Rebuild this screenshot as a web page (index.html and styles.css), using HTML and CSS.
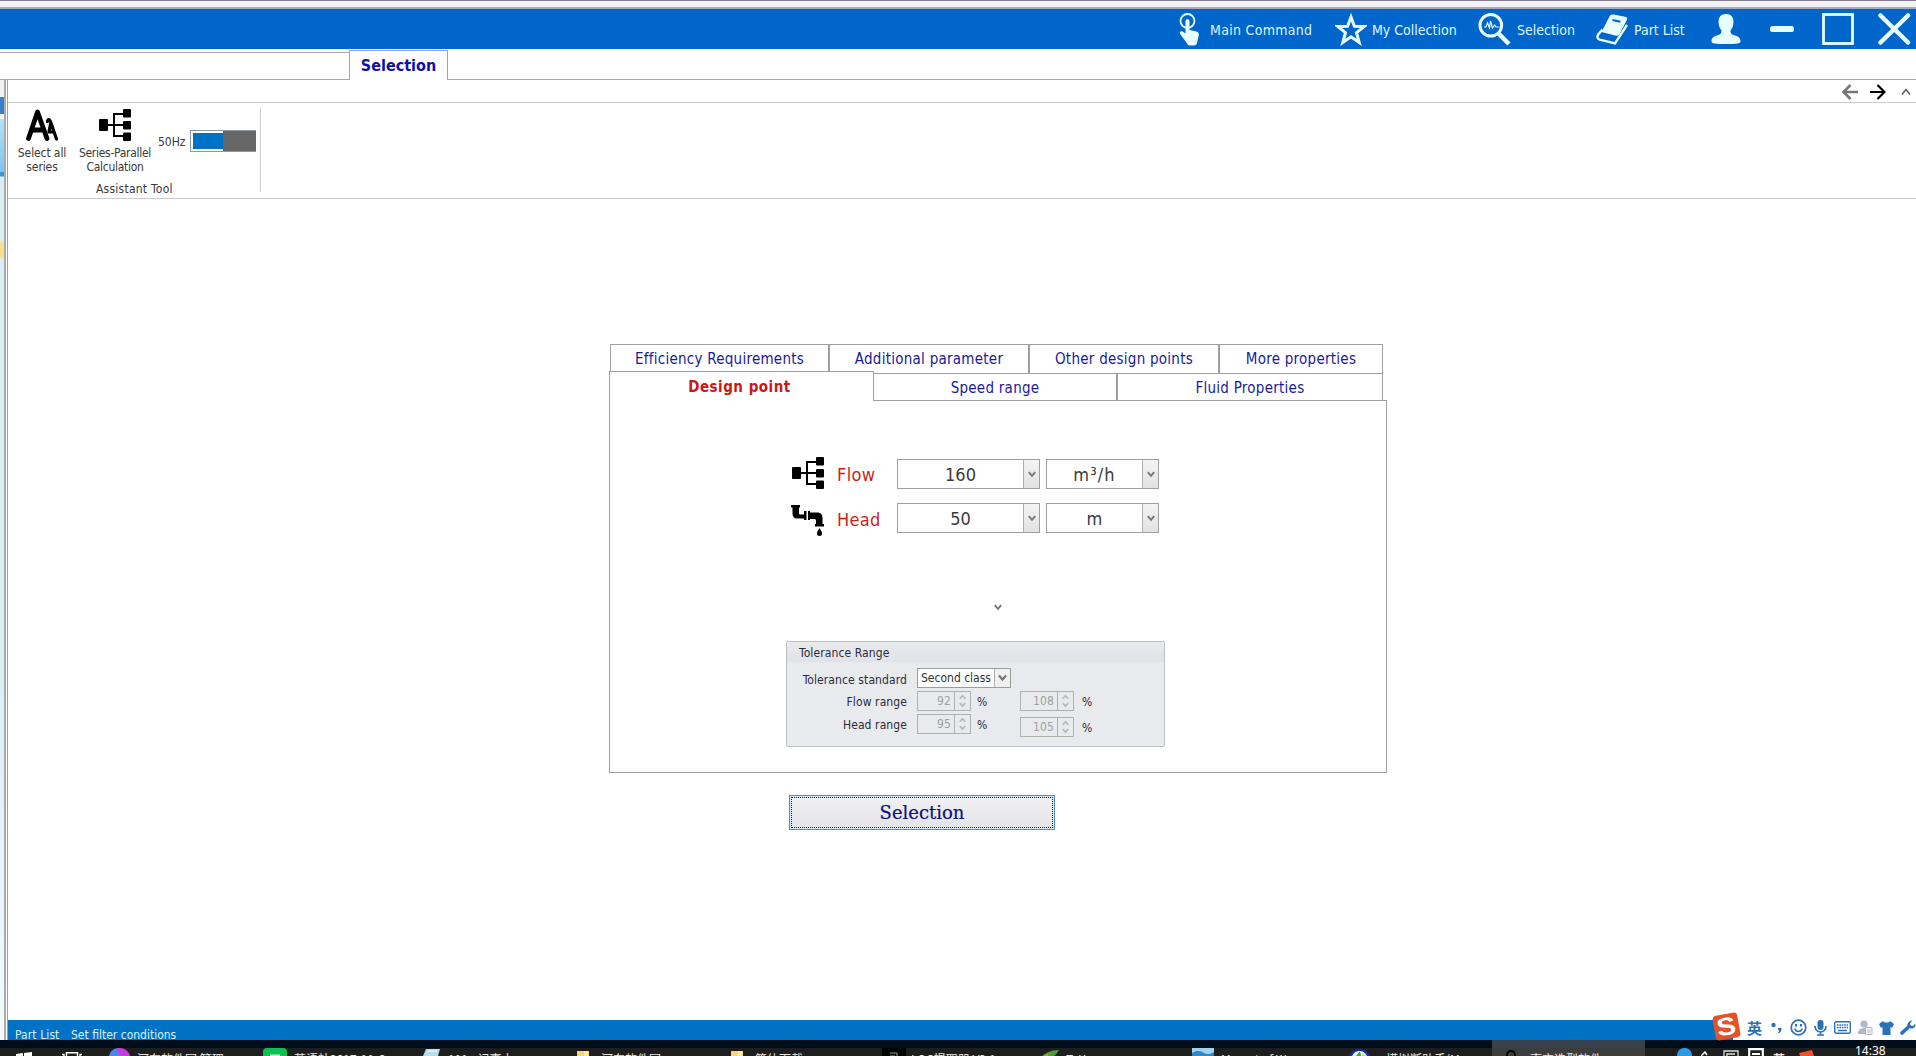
FILE: index.html
```html
<!DOCTYPE html>
<html lang="en">
<head>
<meta charset="utf-8">
<title>Selection</title>
<link rel="stylesheet" href="styles.css">
</head>
<body>
<svg class="defs" width="0" height="0">
  <symbol id="tree" viewBox="0 0 32 32"><path d="M8 16h18M15 4v24M14 5h11M14 27h11" fill="none" stroke="#000" stroke-width="2"/><rect x="0" y="10" width="9" height="12" rx="1"/><rect x="24" y="0" width="8" height="8.500" rx="1"/><rect x="24" y="12" width="8" height="8.500" rx="1"/><rect x="24" y="23.500" width="8" height="8.500" rx="1"/></symbol>
  <symbol id="down" viewBox="0 0 8 7"><path d="M.8 1.200L4 4.800l3.200-3.600" fill="none" stroke="currentColor" stroke-width="2"/></symbol>
  <symbol id="up" viewBox="0 0 8 7"><path d="M.8 5.500L4 2l3.200 3.500" fill="none" stroke="currentColor" stroke-width="2"/></symbol>
  <symbol id="folder" viewBox="0 0 12 5"><path d="M0 0h12v5H0z" fill="#f5d67a"/><path d="M7 0h4v5H7z" fill="#fbe8a8"/></symbol>
</svg>

<div class="edge"></div>
<header class="titlebar">
  <svg width="20" height="33" viewBox="0 0 20 33"><circle cx="8.500" cy="8" r="7" fill="none" stroke="#e8ffff" stroke-width="1.800"/><path d="M6.500 8c0-2.500 4-2.500 4 0v9l7 1.500c2 .5 2.500 1.500 2.300 3.500L18 30c-.4 1.500-1.500 2.500-3 2.500h-4c-1.500 0-2.500-.8-3-2L.8 20.500C.3 19 2 17.500 3.500 18.500l3 2z" fill="#e8ffff"/></svg>
  <span class="nav nav-main">Main Command</span>
  <svg width="32" height="33" viewBox="0 0 32 33"><path d="M16 4l3.400 9.200 9.800.3-7.700 6.200 2.700 9.800-8.200-5.700-8.200 5.700 2.700-9.800-7.700-6.200 9.800-.3z" fill="none" stroke="#e8ffff" stroke-width="3"/></svg>
  <span class="nav">My Collection</span>
  <svg width="34" height="33" viewBox="0 0 34 33"><circle cx="12.800" cy="12.300" r="10.800" fill="none" stroke="#e8ffff" stroke-width="3"/><path d="M20.500 20.500l10.500 10.500" stroke="#e8ffff" stroke-width="4.500"/><path d="M6 14h2l1.500-4 2 5 1-7 2 7 2-3 1.500 2H21" fill="none" stroke="#e8ffff" stroke-width="1.200"/></svg>
  <span class="nav">Selection</span>
  <svg width="33" height="33" viewBox="0 0 33 33"><path d="M14 2.500q1-1.500 3.500-1L29 3.800q3 .7 2 3L23.500 21q-1 2.200-3.500 1.700L5.500 19z" fill="#e8ffff"/><path d="M16.500 7l8 1.700" stroke="#06c" stroke-width="2"/><path d="M6.500 16.500L2.200 21.500c-1.500 2.500-.5 4.500 1.500 5.200L19 30.300 31 12" fill="none" stroke="#e8ffff" stroke-width="2.400"/><path d="M5 20.500l14 4" stroke="#06c" stroke-width=".8"/></svg>
  <span class="nav">Part List</span>
  <svg width="30" height="33" viewBox="0 0 30 33"><path d="M15 1c5 0 7.500 3 7.500 7.500 0 3.500-1 6.500-3 9 0 3 1 4 4.500 5 4 1.200 5.500 2.500 5.500 6 0 2-4 2.500-14.500 2.500S.5 30.500.5 28.500c0-3.500 1.500-4.800 5.500-6 3.500-1 4.500-2 4.500-5-2-2.500-3-5.500-3-9C7.500 4 10 1 15 1z" fill="#e8ffff"/></svg>
  <svg width="24" height="33" viewBox="0 0 24 33"><rect y="13" width="24" height="6" rx="2.500" fill="#e8ffff"/></svg>
  <svg width="32" height="33" viewBox="0 0 32 33"><rect x="1.500" y="1.500" width="29" height="29" fill="none" stroke="#e8ffff" stroke-width="2.800"/></svg>
  <svg width="33" height="33" viewBox="0 0 33 33"><path d="M2.500 2.500l27.500 27M30 2.500l-27.500 27" stroke="#e8ffff" stroke-width="4.500" stroke-linecap="round"/></svg>
</header>

<div class="tabstrip">
  <div class="strip-left"></div>
  <div class="page-tab">Selection</div>
  <div class="strip-right"></div>
</div>

<div class="body">
  <aside class="behind"></aside>
  <div class="window">
    <div class="arrows">
      <svg width="16" height="16" viewBox="0 0 16 16"><path d="M16 8H2M8.500 1L1.500 8l7 7" fill="none" stroke="#777" stroke-width="2.600"/></svg>
      <svg width="16" height="16" viewBox="0 0 16 16"><path d="M0 8h14M7.500 1l7 7-7 7" fill="none" stroke="#000" stroke-width="2.200"/></svg>
      <svg class="collapse" width="10" height="16" viewBox="0 0 10 16"><path d="M1 10.500l4-5 4 5" fill="none" stroke="#666" stroke-width="1.700"/></svg>
    </div>
    <div class="ribbon">
      <div class="ribbon-group">
        <div class="tools">
          <div class="tool tool-series">
            <svg width="33" height="32" viewBox="0 0 33 32"><path d="M2.500 29.500L11.500 3l9.500 26.500M6.500 21h10" fill="none" stroke="#000" stroke-width="4.800" stroke-linecap="round" stroke-linejoin="round"/><path d="M21.500 12.500c.5-2.500 2-2.500 3 0L30.500 30M24.500 15l-1.500 8h4" fill="none" stroke="#000" stroke-width="3.200" stroke-linecap="round" stroke-linejoin="round"/></svg>
            <span>Select all</span><span>series</span>
          </div>
          <div class="tool tool-parallel">
            <svg width="32" height="32"><use href="#tree"/></svg>
            <span>Series-Parallel</span><span>Calculation</span>
          </div>
          <span class="hz">50Hz</span>
          <div class="switch"></div>
        </div>
        <div class="group-name">Assistant Tool</div>
      </div>
    </div>

    <main class="main">
      <div class="row row-back">
        <div class="tab tab-eff">Efficiency Requirements</div>
        <div class="tab tab-add">Additional parameter</div>
        <div class="tab tab-other">Other design points</div>
        <div class="tab tab-more">More properties</div>
      </div>
      <div class="row row-front">
        <div class="active">Design point</div>
        <div class="tab tab-speed">Speed range</div>
        <div class="tab tab-fluid">Fluid Properties</div>
        <div class="stub"></div>
      </div>
      <div class="panel">
        <div class="field">
          <svg width="32" height="32"><use href="#tree"/></svg>
          <span class="label">Flow</span>
          <div class="combo quantity"><span>160</span><i><svg width="8" height="7"><use href="#down"/></svg></i></div>
          <div class="combo unit"><span class="cubic">m³/h</span><i><svg width="8" height="7"><use href="#down"/></svg></i></div>
        </div>
        <div class="field field-head">
          <svg width="33" height="32" viewBox="0 0 33 32"><path d="M0 0h9v2.500H8V8c0 1 .5 1.500 1.500 1.500H13V6h2.500v9H13v-1.500H6c-3 0-4.500-2-4.500-5V2.500H0zM17 6h2v1.500h7c4 0 5.500 2 5.500 6V19H33v2.500h-9V19h1v-3c0-1.500-.5-2-2-2h-4v1h-2z"/><path d="M28.500 23c1.200 2.200 2.500 3.500 2.500 5.500a2.500 2.500 0 0 1-5 0c0-2 1.300-3.300 2.500-5.500z"/></svg>
          <span class="label">Head</span>
          <div class="combo quantity"><span>50</span><i><svg width="8" height="7"><use href="#down"/></svg></i></div>
          <div class="combo unit"><span>m</span><i><svg width="8" height="7"><use href="#down"/></svg></i></div>
        </div>
        <div class="more"><svg width="8" height="7"><use href="#down"/></svg></div>
        <div class="tolerance">
          <div class="tolerance-head">Tolerance Range</div>
          <div class="tolerance-grid">
            <span class="name name-std">Tolerance standard</span>
            <div class="combo-small"><span>Second class</span><i><svg width="9" height="8"><use href="#down"/></svg></i></div>
            <span class="name">Flow range</span>
            <div class="spin"><span>92</span><i><svg width="7" height="6"><use href="#up"/></svg><svg width="7" height="6"><use href="#down"/></svg></i></div>
            <span class="pct">%</span>
            <div class="spin"><span>108</span><i><svg width="7" height="6"><use href="#up"/></svg><svg width="7" height="6"><use href="#down"/></svg></i></div>
            <span class="pct pct-max">%</span>
            <span class="name">Head range</span>
            <div class="spin"><span>95</span><i><svg width="7" height="6"><use href="#up"/></svg><svg width="7" height="6"><use href="#down"/></svg></i></div>
            <span class="pct">%</span>
            <div class="spin low"><span>105</span><i><svg width="7" height="6"><use href="#up"/></svg><svg width="7" height="6"><use href="#down"/></svg></i></div>
            <span class="pct pct-max low">%</span>
          </div>
        </div>
      </div>
      <button class="go"><span>Selection</span></button>
    </main>
    <footer class="status"><span class="part">Part List</span><span>Set filter conditions</span></footer>
  </div>
</div>

<div class="taskbar">
  <svg class="start" width="16" height="4" viewBox="0 0 16 4"><path d="M0 2l7-1v3H0zM8 .9L16 0v4H8z" fill="#fff"/></svg>
  <svg class="views" width="20" height="4" viewBox="0 0 20 4"><path d="M4.500 4V.7h11V4M0 2.500h2V4M20 2.500h-2V4" fill="none" stroke="#fff" stroke-width="1.400"/></svg>
  <svg class="ico" width="21" height="8" viewBox="0 0 21 8"><path d="M0 8C1 3 5 0 10 0l3 8z" fill="#4a86f0"/><path d="M9 0c6-.5 11 3 12 8h-8C9 6 8 3 9 0z" fill="#c43ce0"/></svg>
  <span class="task t1">河东软件园 管理</span>
  <svg class="ico" width="24" height="8" viewBox="0 0 24 8"><path d="M0 8V4q0-4 4-4h16q4 0 4 4v4z" fill="#10c050"/><path d="M7 7.300h10" stroke="#fff" stroke-width="1.400"/></svg>
  <span class="task t2">英语站2017-11-6</span>
  <svg class="ico" width="17" height="7" viewBox="0 0 17 7"><path d="M3 0h14l-2 7H0z" fill="#b8dce8"/><path d="M5 2h9" stroke="#fff"/></svg>
  <span class="task t3">111 - 记事本</span>
  <svg class="ico" width="12" height="5"><use href="#folder"/></svg>
  <span class="task t4">河东软件园</span>
  <svg class="ico" width="12" height="5"><use href="#folder"/></svg>
  <span class="task t5">简体下载</span>
  <svg class="ico" width="24" height="8" viewBox="0 0 24 8"><path d="M0 0h24v8H0z"/><path d="M8 5h7v3M8 8h5" fill="none" stroke="#999"/></svg>
  <span class="task t6">LOC提取器 V2.1</span>
  <svg class="ico" width="17" height="6" viewBox="0 0 17 6"><path d="M0 6C4 3 9 0 17 0c-2 3-3 5-5 6z" fill="#4c9c34"/><path d="M1 6l6-3-1 3z" fill="#e08030"/></svg>
  <span class="task t7">ToYcon</span>
  <svg class="ico" width="22" height="8" viewBox="0 0 22 8"><path d="M0 0h22v8H0z" fill="#9fd0ee"/><path d="M0 5c5-3 9-2 12 0s7 1 10-1v4H0z" fill="#2d88c4"/></svg>
  <span class="task t8">Mozart of W...</span>
  <svg class="ico" width="21" height="7" viewBox="0 0 21 7"><path d="M0 7C2 2 6 0 10.500 0S19 2 21 7z" fill="#1c2c9c"/><path d="M3 7c2-4 5-5 7.500-5S16 3 18 7z" fill="#e8f4ff"/><path d="M7 7l4-5 1 5z" fill="#30a840"/><path d="M13 7l1-3 3 3z" fill="#f0d020"/></svg>
  <span class="task t9">模拟断助手(M...</span>
  <div class="current"><svg width="10" height="6" viewBox="0 0 10 6"><path d="M1 6V5a4 4 0 0 1 8 0v1" fill="none" stroke="#000" stroke-width="2"/></svg><span class="task">南方选型软件</span></div>
  <div class="tray">
    <svg width="15" height="8" viewBox="0 0 15 8"><path d="M0 8C0 2 4 0 7.500 0S15 2 15 8z" fill="#2d9ae8"/></svg>
    <svg class="signal" width="8" height="5" viewBox="0 0 8 5"><path d="M0 5l4-4 2 3" fill="none" stroke="#fff" stroke-width="1.500"/></svg>
    <svg width="16" height="6" viewBox="0 0 16 6"><path d="M1 6V1h14v5M4 6V4h8" fill="none" stroke="#ddd" stroke-width="1.300"/></svg>
    <svg width="16" height="8" viewBox="0 0 16 8"><path d="M1.200 8V1.200h13.600V8M4 6h8" fill="none" stroke="#fff" stroke-width="2.200"/></svg>
    <span class="task lang">英</span>
    <svg width="15" height="6" viewBox="0 0 15 6"><path d="M0 3l13-3 2 6H1z" fill="#f0502a"/></svg>
  </div>
  <span class="clock">14:38</span>
</div>

<div class="ime">
  <span class="logo"><b>S</b></span>
  <span class="ying">英</span>
  <svg width="13" height="12" viewBox="0 0 13 12"><circle cx="2.500" cy="3" r="2.200"/><path d="M7 6h3.500c.3 2.500-.7 4.500-3 5.500l-.5-1c1-.7 1.300-1.500 1-2.500H7z"/></svg>
  <svg width="17" height="17" viewBox="0 0 17 17"><circle cx="8.500" cy="8.500" r="7.300" fill="none" stroke="#2a72b5" stroke-width="1.700"/><path d="M4.800 9.500c1 4 6.400 4 7.400 0" fill="none" stroke="#2a72b5" stroke-width="1.400"/><path d="M5 5h2v2.500H5zM10 5h2v2.500h-2z"/></svg>
  <svg width="13" height="16" viewBox="0 0 13 16"><rect x="3.500" width="6" height="10" rx="3"/><path d="M1 6c0 8 11 8 11 0M6.500 12v3M3 15h7" fill="none" stroke="#2a72b5" stroke-width="1.700"/></svg>
  <svg width="17" height="13" viewBox="0 0 17 13"><rect x=".7" y=".7" width="15.600" height="11.600" rx="1.500" fill="none" stroke="#2a72b5" stroke-width="1.400"/><path d="M3 4h11M3 6.500h11" stroke="#2a72b5" stroke-width="1.600" stroke-dasharray="1.600 .8"/><path d="M4 9.500h9" stroke="#2a72b5" stroke-width="1.500"/></svg>
  <svg class="off" width="15" height="16" viewBox="0 0 15 16"><circle cx="6" cy="4" r="3.600"/><path d="M0 14c0-4 2-6 6-6h2v6z"/><path d="M7.500 7.500h6.500v7H7.500z" fill="#fff" stroke="#b0b8c8"/><path d="M9 10h4M9 12h4" stroke="#b0b8c8"/></svg>
  <svg width="15" height="14" viewBox="0 0 15 14"><path d="M4 0c1 2 6 2 7 0l4 3-2 4-1.500-1V14h-8V6L2 7 0 3z"/></svg>
  <svg width="16" height="15" viewBox="0 0 16 15"><path d="M2 13L9 6.500" stroke="#2a72b5" stroke-width="3.600" stroke-linecap="round"/><path d="M12.500.5L10 3l.5 2.500L13 6l2.500-2.500C16 6 14 9 11 8.500 8 8 6.500 5.500 8 3c1-2 2.500-2.800 4.500-2.500z"/></svg>
</div>
</body>
</html>
```
FILE: styles.css
```css
* { box-sizing: border-box; }

html, body { margin: 0; height: 1056px; overflow: hidden; }

body {
  background: #fff;
  color: #3a3a3a;
  font: 12px/14px "DejaVu Sans Condensed", "DejaVu Sans", sans-serif;
  font-stretch: condensed;
  white-space: nowrap;
}

svg { display: block; flex: none; }
i { font-style: normal; }
.defs { position: absolute; }

/* title bar */
.edge { height: 9px; background: #f0f0f5; border-top: 1px solid #85808c; border-bottom: 2px solid #a3abbd; }

.titlebar {
  display: grid;
  grid-template-columns: 31px 125px 37px 106px 39px 79px 38px 77px 59px 52px 56px 38px;
  height: 40px;
  padding: 4px 0 0 1179px;
  background: #0066cc;
  color: #dff6ff;
  font-size: 14px;
  line-height: 22px;
}
.nav { padding-top: 6px; letter-spacing: 0; }
.nav-main { letter-spacing: .3px; }

.tabstrip { display: flex; height: 31px; }
.strip-left { width: 349px; margin-top: 3px; border: solid #a5a8b0; border-width: 1px 0; }
.page-tab {
  width: 99px;
  margin-top: 1px;
  border: 1px solid #8fa8c0;
  border-bottom: 0;
  text-align: center;
  font-weight: bold;
  font-size: 16px;
  line-height: 29px;
  color: #1010a4;
}
.strip-right { flex: 1; border-bottom: 1px solid #a8a8a8; }

/* window */
.body { display: flex; height: 960px; }
.behind {
  width: 8px;
  background:
    linear-gradient(90deg, transparent 4px, #aaa 4px 6px, #fff 6px 7px, #a0a0a0 7px),
    linear-gradient(#f2f2f0 17px, #3a80c8 17px 34px, #f2f4f6 34px 39px, #b4e0f8 39px, #7cc6ee 92px, #3c98cc 92px 96px, #dceef6 97px 160px, #f6e08c 164px 176px, #dceef6 180px, #dceef6 600px, #f4fafc 960px);
}
.window { flex: 1; display: flex; flex-direction: column; }

.arrows { display: flex; gap: 12px; height: 23px; padding: 4px 0 0 1834px; border-bottom: 1px solid #ccc; }
.collapse { margin-left: 3px; }

.ribbon { height: 96px; padding-top: 5px; border-bottom: 1px solid #ccc; }
.ribbon-group { width: 253px; height: 84px; border-right: 1px solid #ccc; }
.tools { display: flex; height: 74px; padding-left: 10px; }
.tool { display: flex; flex-direction: column; align-items: center; padding-top: 1px; }
.tool svg { margin-bottom: 5px; }
.tool-series { width: 48px; letter-spacing: -.1px; }
.tool-parallel { width: 74px; margin-left: 12px; letter-spacing: -.28px; }
.hz { margin: 27px 0 0 6px; width: 32px; }
.switch {
  width: 66px;
  height: 22px;
  margin-top: 22px;
  border: 1px solid #8a9aa8;
  border-right: 0;
  background:
    linear-gradient(90deg, transparent 32px, #666 32px),
    linear-gradient(#0072c6, #0072c6) 2px 2px / 32px 16px no-repeat #fff;
}
.group-name { padding-left: 88px; letter-spacing: .24px; }

/* dialog */
.main { flex: 1; padding: 145px 0 0 601px; }
.row { display: flex; text-align: center; font-size: 15px; line-height: 28px; letter-spacing: .26px; color: #1a1a9c; }
.row-back { height: 27px; padding-left: 1px; }
.row-back .tab { height: 30px; }
.row-front { position: relative; height: 30px; }
.tab { border: 1px solid #a0a0a0; background: #fff; }
.tab-eff { width: 219px; }
.tab-add { width: 200px; }
.tab-other { width: 190px; }
.tab-more { width: 164px; }
.active {
  width: 265px;
  padding-right: 4px;
  border: 1px solid #a0a0a0;
  border-bottom: 0;
  background: #fff;
  color: #c81818;
  font-weight: bold;
  line-height: 30px;
  letter-spacing: .5px;
}
.tab-speed, .tab-fluid { height: 28px; margin-top: 2px; line-height: 28px; }
.tab-speed { width: 243px; border-left: 0; }
.tab-fluid { width: 266px; }
.stub { width: 4px; border-bottom: 1px solid #a0a0a0; }

.panel { width: 778px; height: 372px; padding-top: 56px; border: 1px solid #a0a0a0; border-top: 0; }
.field { display: flex; height: 32px; margin: 0 0 12px 182px; font-size: 18px; }
.label { width: 60px; margin-left: 13px; color: #c81e1e; line-height: 36px; letter-spacing: .35px; }
.field-head > svg { margin: 4px 0 0 -1px; }
.field-head .label { line-height: 38px; }
.combo { display: flex; height: 30px; margin-top: 2px; border: 1px solid #a0a0a0; line-height: 29px; }
.combo span { flex: 1; text-align: center; }
.combo i { display: flex; justify-content: center; align-items: center; width: 16px; border-left: 1px solid #b0b0b0; background: linear-gradient(#f4f4f4, #e2e2e2); color: #777; }
.quantity { width: 143px; }
.unit { width: 113px; margin-left: 6px; }
.combo .cubic { letter-spacing: 1.1px; }

.more { margin: 71px 0 0 384px; color: #777; }

.tolerance { width: 379px; height: 106px; margin: 30px 0 0 176px; border: 1px solid #bcbec4; border-radius: 2px; background: #e9eaee; color: #2c2c3c; }
.tolerance-head { height: 20px; padding-left: 12px; line-height: 22px; letter-spacing: .1px; background: linear-gradient(#e9eaee, #e1e2e7); }
.tolerance-grid { display: grid; grid-template-columns: 130px 54px 49px 54px 49px; grid-template-rows: 23px 23px 20px; padding-top: 6px; line-height: 22px; }
.name { padding-right: 10px; text-align: right; letter-spacing: .1px; }
.name-std { line-height: 24px; }
.combo-small { display: flex; grid-column: 2 / 6; width: 94px; height: 20px; border: 1px solid #9c9c9c; background: #fff; line-height: 19px; color: #333; }
.combo-small span { flex: 1; padding-left: 3px; }
.combo-small i { display: flex; align-items: center; justify-content: center; width: 16px; border-left: 1px solid #b0b0b0; background: #f0f0f0; color: #777; }
.spin { display: flex; width: 54px; height: 20px; border: 1px solid #b0b0b0; line-height: 19px; color: #a0a0a0; }
.spin span { flex: 1; padding-right: 3px; text-align: right; letter-spacing: .1px; }
.spin i { display: flex; flex-direction: column; align-items: center; justify-content: center; gap: 2px; width: 16px; border-left: 1px solid #b0b0b0; color: #b8b8b8; }
.pct { padding-left: 6px; }
.pct-max { padding-left: 8px; }
.low { margin-top: 3px; }

.go {
  display: block;
  width: 266px;
  height: 35px;
  margin: 22px 0 0 180px;
  padding: 1px;
  border: 1px solid #4a90c4;
  background: #d4ebfa;
  color: #10107c;
  font: 18px/29px "DejaVu Serif", serif;
  -webkit-text-stroke: .2px #10107c;
}
.go span { display: block; height: 31px; border: 1px dotted #102040; background: linear-gradient(#f1f0f2, #e4e3e5); }

.status { height: 20px; padding-left: 7px; background: #0072c6; color: #d8f0fc; line-height: 30px; }
.part { display: inline-block; width: 56px; letter-spacing: .1px; }

/* system taskbar */
.taskbar {
  position: relative;
  display: flex;
  align-items: flex-end;
  height: 16px;
  padding-left: 16px;
  overflow: hidden;
  background: linear-gradient(#000e1c 8px, #1e1e1e 8px);
  color: #e8e8e8;
}
.task { align-self: flex-start; overflow: hidden; font: 12px/37px "Noto Sans CJK SC", sans-serif; padding-left: 7px; }
.views { margin: 0 27px 0 30px; }
.t1 { width: 133px; }
.t2 { width: 136px; }
.t3 { width: 137px; padding-left: 8px; }
.t4 { width: 142px; padding-left: 12px; }
.t5 { width: 139px; padding-left: 12px; }
.t6 { width: 136px; padding-left: 5px; }
.t7 { width: 133px; }
.t8 { width: 135px; }
.t9 { width: 122px; padding-left: 16px; }
.current { display: flex; align-items: flex-end; width: 153px; height: 16px; padding-left: 14px; background: linear-gradient(#37424c 8px, #3c3c3c 8px); }
.current .task { padding-left: 14px; }
.tray { display: flex; align-items: flex-end; gap: 9px; height: 16px; margin-left: 32px; }
.signal { margin-right: 5px; }
.lang { padding: 0 5px 0 0; font-weight: bold; }
.clock { position: absolute; left: 1855px; top: 0; font: 12px/21px "Noto Sans", sans-serif; color: #fff; }

/* input method bar */
.ime {
  position: absolute;
  left: 1713px;
  top: 1015px;
  display: grid;
  grid-template-columns: 34px 24px 19px 24px 20px 24px 21px 21px 16px;
  align-items: center;
  width: 203px;
  height: 25px;
  background: linear-gradient(90deg, transparent 20px, #fff 20px);
  fill: #2a72b5;
  color: #2a72b5;
}
.logo {
  display: flex;
  align-items: center;
  justify-content: center;
  width: 25px;
  height: 25px;
  margin: -2px 0 0 1px;
  border-radius: 4px;
  background: #e4522a;
  color: #fff;
  font: 25px/25px "Liberation Sans", sans-serif;
  transform: rotate(-10deg);
}
.logo b { transform: scaleX(1.15); }
.ying { font: bold 15px/22px "Noto Sans CJK SC", sans-serif; }
.off { fill: #b0b8c8; }
```
